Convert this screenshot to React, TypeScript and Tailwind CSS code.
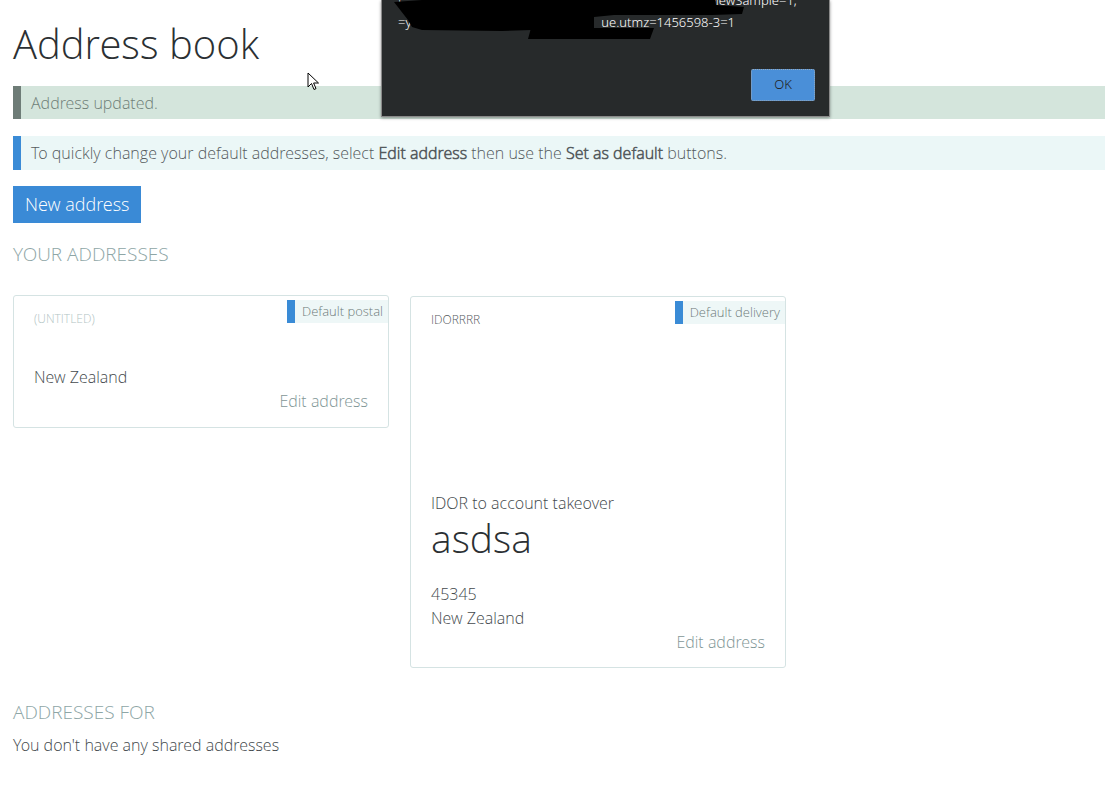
import React from 'react';

const font = { fontFamily: '"Open Sans Light", "Open Sans", "Noto Sans", sans-serif' };
const sysFont = { fontFamily: '"Noto Sans", sans-serif' };

const Badge: React.FC<{ label: string }> = ({ label }) => (
  <div className="absolute top-[4px] right-0 flex h-[23px] items-stretch">
    <div className="w-[8px] bg-[#3a8bd6]" />
    <div className="bg-[#eef7f7] pl-[7px] pr-[5px] text-[13px] leading-[23px] text-[#6d7a7a]">{label}</div>
  </div>
);

const App: React.FC = () => {
  return (
    <div className="relative h-[788px] w-[1105px] overflow-hidden bg-white font-light" style={font}>
      <div className="pl-[13px] pt-[17px]">
        <h1 className="text-[40px] leading-[54px] font-light text-[#2b3033]">Address book</h1>

        {/* alerts */}
        <div className="mt-[15px] flex h-[33px] items-center border-l-[8px] border-[#6e7c77] bg-[#d4e5dc] pl-[10px] text-[16px] text-[#6f7f78]">
          Address updated.
        </div>
        <div className="mt-[17px] flex h-[34px] items-center border-l-[8px] border-[#3a8bd6] bg-[#ebf7f7] pl-[10px] text-[16px] text-[#555b5e]">
          <span>
            To quickly change your default addresses, select <b className="font-semibold">Edit address</b> then use the{' '}
            <b className="font-semibold">Set as default</b> buttons.
          </span>
        </div>

        <button className="mt-[16px] h-[37px] bg-[#3a8ad6] px-[12px] text-[18px] font-light text-white">New address</button>

        <h2 className="mt-[19px] text-[19px] leading-[24px] font-light text-[#8ea6a6] uppercase">Your addresses</h2>

        <div className="mt-[29px] flex items-start gap-[21px]">
          <div className="relative w-[376px] rounded-[3px] border border-[#d5e3e3] px-[20px] pt-[14px] pb-[14px]">
            <Badge label="Default postal" />
            <div className="text-[12px] leading-[18px] text-[#b2c4c4]">(UNTITLED)</div>
            <div className="mt-[37px] text-[16px] leading-[24px] text-[#444a4d]">New Zealand</div>
            <div className="text-right text-[16px] leading-[24px] text-[#7f9696]">Edit address</div>
          </div>

          <div className="relative mt-[1px] w-[376px] rounded-[3px] border border-[#d5e3e3] px-[20px] pt-[14px] pb-[13px]">
            <Badge label="Default delivery" />
            <div className="text-[12px] leading-[18px] text-[#555b5e]">IDORRRR</div>
            <div className="mt-[162px] text-[16px] leading-[24px] text-[#444a4d]">IDOR to account takeover</div>
            <div className="-mt-[3px] text-[39px] leading-[52px] text-[#2b3033]">asdsa</div>
            <div className="mt-[18px] text-[16px] leading-[24px] text-[#444a4d]">45345</div>
            <div className="text-[16px] leading-[24px] text-[#444a4d]">New Zealand</div>
            <div className="text-right text-[16px] leading-[24px] text-[#7f9696]">Edit address</div>
          </div>
        </div>

        <h2 className="mt-[32px] text-[19px] leading-[24px] font-light text-[#8ea6a6] uppercase">Addresses for</h2>
        <p className="mt-[9px] text-[16px] leading-[24px] text-[#444a4d]">You don't have any shared addresses</p>
      </div>

      {/* browser alert dialog over the page */}
      <div className="absolute top-0 left-[381px] h-[117px] w-[449px] border border-t-0 border-[#8a8a8a] bg-[#272a2b] shadow-[0_1px_3px_rgba(0,0,0,0.4)]" style={sysFont}>
        <span className="absolute top-[-9px] left-[16px] text-[13px] text-white">!</span>
        <span className="absolute top-[-9px] right-[32px] text-[13px] whitespace-nowrap text-white">viewSample=1;</span>
        <span className="absolute top-[13px] left-[16px] text-[13px] text-white">=y</span>
        <span className="absolute top-[13px] right-[94px] text-[13px] whitespace-nowrap text-white">ue.utmz=1456598-3=1</span>
        <svg className="absolute top-0 left-0" width="449" height="45" viewBox="0 0 449 45">
          <path d="M12 2 L40 0 L333 0 L334 5 L362 7 L360 14 L330 15 L232 15 L212 17 L212 28 L120 31 L40 30 L30 27 L26 20 Z" fill="#000" />
          <path d="M149 28 L272 28 L268 39 L146 39 Z" fill="#000" />
        </svg>
        <button className="absolute top-[69px] left-[369px] h-[32px] w-[64px] rounded-[2px] border border-dotted border-[#9ab] bg-[#4a8fd8] text-[13px] text-[#222]">
          OK
        </button>
      </div>

      {/* mouse pointer */}
      <svg className="absolute top-[72px] left-[307px]" width="14" height="20" viewBox="0 0 14 20">
        <path d="M1 1 L1 15 L4.5 11.5 L7 17.5 L9 16.6 L6.6 11 L11.5 11 Z" fill="#fff" stroke="#000" strokeWidth="1" strokeLinejoin="round" />
      </svg>
    </div>
  );
};

export default App;
